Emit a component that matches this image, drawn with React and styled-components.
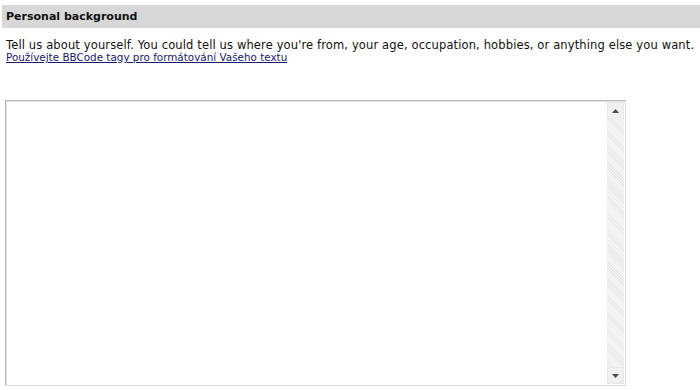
import React from "react";
import styled, { createGlobalStyle } from "styled-components";

const Global = createGlobalStyle`
  html, body { margin: 0; padding: 0; background: #fff; }
  body { font-family: "DejaVu Sans", Verdana, sans-serif; color: #000; }
`;

const Page = styled.div`
  padding: 5px 0 0 2px;
`;

const Header = styled.div`
  background: #d8d8d8;
  height: 23px;
  display: flex;
  align-items: center;
  padding-left: 4px;
  font-size: 11px;
  font-weight: bold;
  color: #111;
`;

const Intro = styled.p`
  margin: 10px 0 0 4px;
  font-size: 11.5px;
  line-height: 14px;
  letter-spacing: 0.13px;
  white-space: nowrap;
  color: #111;
`;

const Help = styled.a`
  display: block;
  margin-left: 4px;
  font-size: 10.4px;
  line-height: 10px;
  color: #1a1a6e;
  text-decoration: underline;
`;

const Box = styled.div`
  margin: 38px 0 0 3px;
  width: 619px;
  height: 284px;
  display: flex;
  border: 1px solid #b8b8b8;
  border-right-color: #dcdcdc;
  border-bottom-color: #dcdcdc;
  box-shadow: inset 1px 1px 0 #e4e4e4;
`;

const Area = styled.textarea`
  flex: 1;
  border: none;
  outline: none;
  resize: none;
  margin: 0;
  padding: 2px;
  font-family: inherit;
  font-size: 11px;
  background: transparent;
`;

const Scroll = styled.div`
  width: 17px;
  margin: 1px 1px 1px 0;
  display: flex;
  flex-direction: column;
  background-color: #f3f3f3;
  background-image: repeating-linear-gradient(
    45deg,
    #e9e9e9 0 1px,
    #f7f7f7 1px 2px
  );
`;

const Arrow = styled.div`
  height: 17px;
  display: flex;
  align-items: center;
  justify-content: center;
  background: #f0f0f0;
  border: 1px solid #e8e8e8;
  box-sizing: border-box;
`;

const Track = styled.div`
  flex: 1;
`;

export default function App() {
  return (
    <Page>
      <Global />
      <Header>Personal background</Header>
      <Intro>
        Tell us about yourself. You could tell us where you're from, your age,
        occupation, hobbies, or anything else you want.
      </Intro>
      <Help href="#">Používejte BBCode tagy pro formátování Vašeho textu</Help>
      <Box>
        <Area />
        <Scroll>
          <Arrow>
            <svg width="7" height="4" viewBox="0 0 7 4">
              <path d="M0 4 L3.5 0 L7 4 Z" fill="#4a4a4a" />
            </svg>
          </Arrow>
          <Track />
          <Arrow>
            <svg width="7" height="4" viewBox="0 0 7 4">
              <path d="M0 0 L3.5 4 L7 0 Z" fill="#4a4a4a" />
            </svg>
          </Arrow>
        </Scroll>
      </Box>
    </Page>
  );
}
